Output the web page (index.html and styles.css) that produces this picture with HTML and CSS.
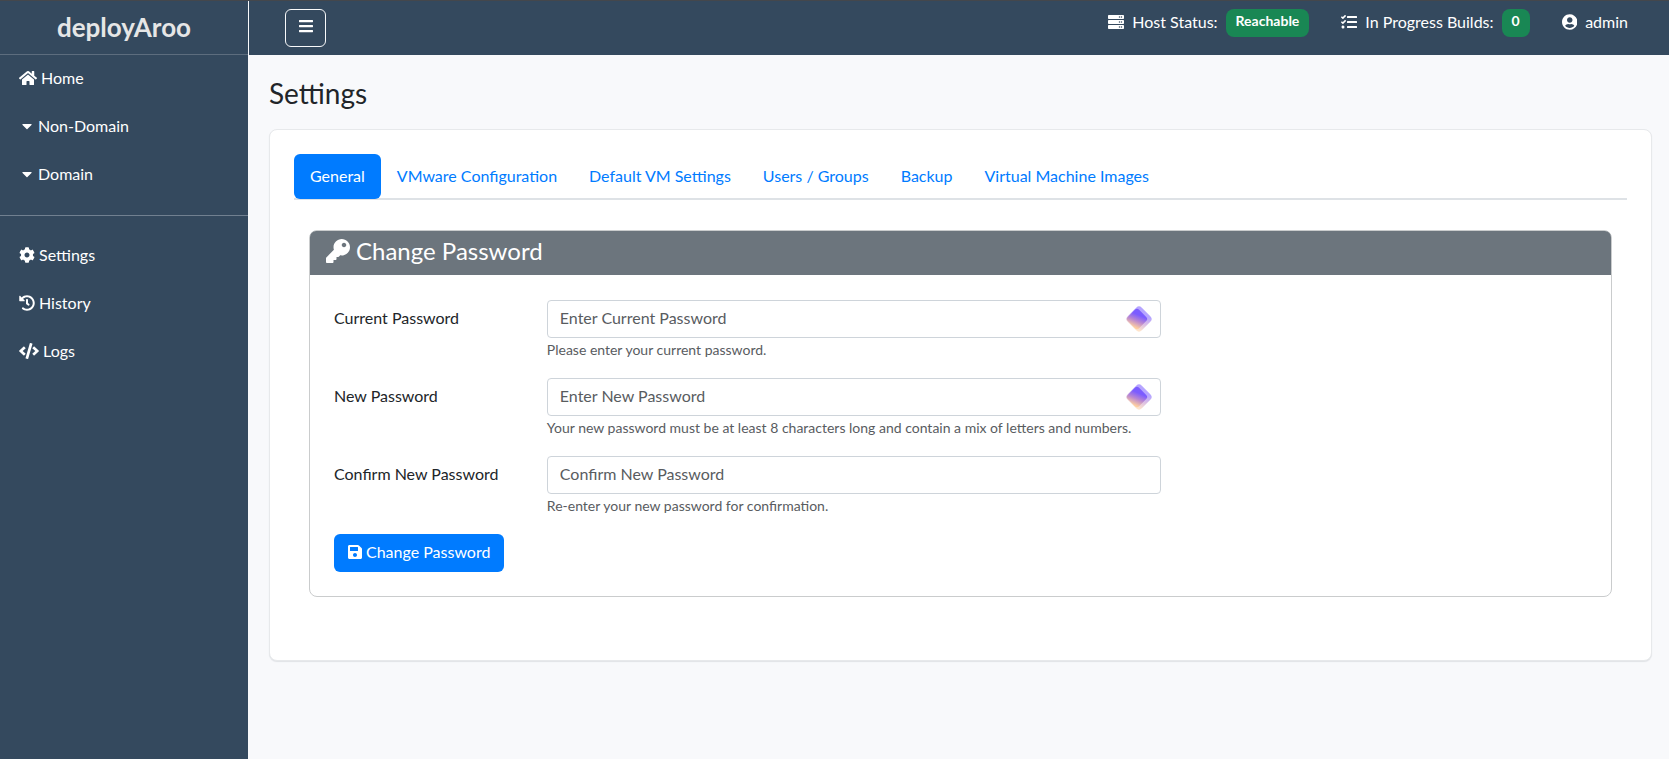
FILE: index.html
```html
<!DOCTYPE html>
<html lang="en">
<head>
<meta charset="utf-8">
<title>deployAroo - Settings</title>
<meta name="viewport" content="width=device-width, initial-scale=1">
<link rel="stylesheet" href="styles.css">
</head>
<body>
<svg class="defs" aria-hidden="true">
  <defs>
    <linearGradient id="gem" x1="0.3" y1="0" x2="0.7" y2="1">
      <stop offset="0.25" stop-color="#7b5cff"/><stop offset="0.6" stop-color="#b987d2"/><stop offset="1" stop-color="#ffcfa0"/>
    </linearGradient>
    <symbol id="diamond" viewBox="0 0 26 26">
      <rect x="3" y="3" width="20" height="20" rx="4" transform="rotate(45 13 13)" fill="url(#gem)" opacity="0.55"/>
      <rect x="3" y="5" width="16" height="16" rx="3" transform="rotate(45 11 13)" fill="url(#gem)"/>
    </symbol>
  </defs>
</svg>
<div class="layout">
  <aside class="sidebar">
    <a class="brand" href="#">deployAroo</a>
    <nav class="side-nav">
      <a class="side-link" href="#"><svg class="icon" viewBox="0 0 576 512"><path d="M280.37 148.26L96 300.11V464a16 16 0 0 0 16 16l112.06-.29a16 16 0 0 0 15.92-16V368a16 16 0 0 1 16-16h64a16 16 0 0 1 16 16v95.64a16 16 0 0 0 16 16.05L464 480a16 16 0 0 0 16-16V300L295.67 148.26a12.19 12.19 0 0 0-15.3 0zM571.6 251.47L488 182.56V44.05a12 12 0 0 0-12-12h-56a12 12 0 0 0-12 12v72.61L318.47 43a48 48 0 0 0-61 0L4.34 251.47a12 12 0 0 0-1.6 16.9l25.5 31A12 12 0 0 0 45.15 301l235.22-193.74a12.19 12.19 0 0 1 15.3 0L530.9 301a12 12 0 0 0 16.9-1.6l25.5-31a12 12 0 0 0-1.7-16.93z"/></svg>Home</a>
      <a class="side-link side-group" href="#"><svg class="icon" viewBox="0 0 320 512"><path d="M31.3 192h257.300c17.800 0 26.700 21.500 14.100 34.100L174.100 354.800c-7.800 7.800-20.500 7.800-28.300 0L17.200 226.100C4.600 213.500 13.500 192 31.300 192z"/></svg>Non-Domain</a>
      <a class="side-link side-group" href="#"><svg class="icon" viewBox="0 0 320 512"><path d="M31.3 192h257.300c17.800 0 26.700 21.500 14.100 34.100L174.100 354.800c-7.800 7.800-20.500 7.800-28.300 0L17.200 226.100C4.600 213.500 13.500 192 31.300 192z"/></svg>Domain</a>
      <hr class="side-rule">
      <a class="side-link" href="#"><svg class="icon" viewBox="0 0 512 512"><path d="M487.4 315.7l-42.6-24.6c4.3-23.2 4.3-47 0-70.2l42.6-24.6c4.9-2.8 7.1-8.6 5.5-14-11.1-35.6-30-67.8-54.7-94.6-3.8-4.1-10-5.1-14.8-2.3L380.8 110c-17.9-15.4-38.5-27.3-60.8-35.1V25.8c0-5.6-3.9-10.5-9.4-11.7-36.7-8.2-74.3-7.8-109.2 0-5.5 1.2-9.4 6.1-9.4 11.7V75c-22.2 7.9-42.8 19.800-60.8 35.1L88.700 85.500c-4.900-2.800-11-1.900-14.800 2.300-24.700 26.700-43.600 58.900-54.700 94.600-1.700 5.400.6 11.200 5.500 14L67.300 221c-4.300 23.200-4.300 47 0 70.200l-42.600 24.600c-4.900 2.800-7.100 8.600-5.500 14 11.100 35.600 30 67.800 54.700 94.600 3.800 4.100 10 5.100 14.800 2.300l42.600-24.600c17.900 15.400 38.500 27.300 60.800 35.100v49.200c0 5.600 3.900 10.500 9.400 11.700 36.700 8.200 74.300 7.800 109.200 0 5.500-1.200 9.400-6.100 9.400-11.700v-49.200c22.200-7.900 42.800-19.800 60.800-35.100l42.600 24.600c4.900 2.800 11 1.900 14.800-2.300 24.700-26.700 43.600-58.900 54.700-94.600 1.500-5.500-.7-11.300-5.600-14.100zM256 336c-44.100 0-80-35.900-80-80s35.900-80 80-80 80 35.900 80 80-35.900 80-80 80z"/></svg>Settings</a>
      <a class="side-link" href="#"><svg class="icon" viewBox="0 0 512 512"><path d="M504 255.531c.253 136.640-111.180 248.372-247.820 248.468-59.015.042-113.223-20.530-155.822-54.911-11.077-8.940-11.905-25.541-1.839-35.607l11.267-11.267c8.609-8.609 22.353-9.551 31.891-1.984C173.062 425.135 212.781 440 256 440c101.705 0 184-82.311 184-184 0-101.705-82.311-184-184-184-48.814 0-93.149 18.969-126.068 49.932l50.754 50.754c10.080 10.080 2.941 27.314-11.313 27.314H24c-8.837 0-16-7.163-16-16V38.627c0-14.254 17.234-21.393 27.314-11.314l49.372 49.372C129.209 34.136 189.552 8 256 8c136.810 0 247.747 110.780 248 247.531zm-180.912 78.784l9.823-12.630c8.138-10.463 6.253-25.542-4.210-33.679L288 256.349V152c0-13.255-10.745-24-24-24h-16c-13.255 0-24 10.745-24 24v135.651l65.409 50.874c10.463 8.137 25.541 6.253 33.679-4.210z"/></svg>History</a>
      <a class="side-link" href="#"><svg class="icon" viewBox="0 0 640 512"><path d="M278.9 511.5l-61-17.7c-6.4-1.8-10-8.5-8.2-14.9L346.2 8.7c1.8-6.4 8.5-10 14.9-8.2l61 17.7c6.4 1.8 10 8.5 8.2 14.9L293.8 503.3c-1.9 6.4-8.5 10.1-14.9 8.2zm-114-112.2l43.5-46.4c4.6-4.9 4.3-12.7-.8-17.2L117 256l90.6-79.7c5.1-4.5 5.5-12.3.8-17.2l-43.5-46.4c-4.5-4.8-12.1-5.1-17-.5L3.8 247.2c-5.1 4.7-5.1 12.8 0 17.5l144.1 135.1c4.9 4.6 12.5 4.4 17-.5zm327.2.6l144.1-135.1c5.1-4.7 5.1-12.8 0-17.5L492.1 112.1c-4.8-4.5-12.4-4.3-17 .5L431.6 159c-4.6 4.9-4.3 12.7.8 17.2L523 256l-90.6 79.7c-5.1 4.5-5.5 12.3-.8 17.2l43.5 46.4c4.5 4.9 12.1 5.1 17 .6z"/></svg>Logs</a>
    </nav>
  </aside>
  <div class="page">
    <header class="topbar">
      <button class="menu-button" type="button" aria-label="Toggle menu"><svg class="icon" viewBox="0 0 448 512"><path d="M16 132h416c8.800 0 16-7.200 16-16V76c0-8.800-7.200-16-16-16H16C7.200 60 0 67.200 0 76v40c0 8.800 7.200 16 16 16zm0 160h416c8.800 0 16-7.200 16-16v-40c0-8.800-7.200-16-16-16H16c-8.800 0-16 7.200-16 16v40c0 8.800 7.200 16 16 16zm0 160h416c8.800 0 16-7.200 16-16v-40c0-8.800-7.200-16-16-16H16c-8.800 0-16 7.200-16 16v40c0 8.800 7.200 16 16 16z"/></svg></button>
      <div class="status-list">
        <a class="status" href="#"><svg class="icon" viewBox="0 0 512 512"><path id="srv" d="M480 160H32c-17.673 0-32-14.327-32-32V64c0-17.673 14.327-32 32-32h448c17.673 0 32 14.327 32 32v64c0 17.673-14.327 32-32 32zm-48-88c-13.255 0-24 10.745-24 24s10.745 24 24 24 24-10.745 24-24-10.745-24-24-24zm-64 0c-13.255 0-24 10.745-24 24s10.745 24 24 24 24-10.745 24-24-10.745-24-24-24z"/><use href="#srv" y="160"/><use href="#srv" y="320"/></svg>Host Status:<span class="badge">Reachable</span></a>
        <a class="status" href="#"><svg class="icon" viewBox="0 0 512 512"><path d="M139.610 35.500a12 12 0 0 0-17 0L58.930 98.810l-22.700-22.120a12 12 0 0 0-17 0L3.530 92.410a12 12 0 0 0 0 17l47.590 47.400a12.780 12.780 0 0 0 17.610 0l15.590-15.620L156.520 69a12.090 12.090 0 0 0 .09-17zm0 159.190a12 12 0 0 0-17 0l-63.680 63.720-22.700-22.100a12 12 0 0 0-17 0L3.530 252a12 12 0 0 0 0 17L51 316.500a12.770 12.770 0 0 0 17.600 0l15.700-15.690 72.200-72.220a12 12 0 0 0 .09-16.900zM64 368c-26.490 0-48.590 21.500-48.590 48S37.530 464 64 464a48 48 0 0 0 0-96zm432 16H208a16 16 0 0 0-16 16v32a16 16 0 0 0 16 16h288a16 16 0 0 0 16-16v-32a16 16 0 0 0-16-16zm0-320H208a16 16 0 0 0-16 16v32a16 16 0 0 0 16 16h288a16 16 0 0 0 16-16V80a16 16 0 0 0-16-16zm0 160H208a16 16 0 0 0-16 16v32a16 16 0 0 0 16 16h288a16 16 0 0 0 16-16v-32a16 16 0 0 0-16-16z"/></svg>In Progress Builds:<span class="badge">0</span></a>
        <a class="status" href="#"><svg class="icon" viewBox="0 0 496 512"><path d="M248 8C111 8 0 119 0 256s111 248 248 248 248-111 248-248S385 8 248 8zm0 96c48.600 0 88 39.400 88 88s-39.400 88-88 88-88-39.400-88-88 39.400-88 88-88zm0 344c-58.700 0-111.300-26.600-146.500-68.200 18.800-35.400 55.600-59.800 98.500-59.800 2.400 0 4.800.4 7.100 1.100 13 4.200 26.600 6.900 40.900 6.900 14.300 0 28-2.700 40.900-6.900 2.300-.7 4.700-1.100 7.100-1.100 42.900 0 79.700 24.400 98.500 59.800C359.300 421.400 306.700 448 248 448z"/></svg>admin</a>
      </div>
    </header>
    <main class="content">
      <h1 class="title">Settings</h1>
      <section class="card">
        <nav class="tabs">
          <a class="tab tab-active" href="#">General</a>
          <a class="tab" href="#">VMware Configuration</a>
          <a class="tab" href="#">Default VM Settings</a>
          <a class="tab" href="#">Users / Groups</a>
          <a class="tab" href="#">Backup</a>
          <a class="tab" href="#">Virtual Machine Images</a>
        </nav>
        <div class="tab-body">
          <section class="panel">
            <h2 class="panel-title"><svg class="icon icon-large" viewBox="0 0 512 512"><path d="M512 176.001C512 273.203 433.202 352 336 352c-11.220 0-22.190-1.062-32.827-3.069l-24.012 27.014A23.999 23.999 0 0 1 261.223 384H224v40c0 13.255-10.745 24-24 24h-40v40c0 13.255-10.745 24-24 24H24c-13.255 0-24-10.745-24-24v-78.059c0-6.365 2.529-12.470 7.029-16.971l161.802-161.802C163.108 213.814 160 195.271 160 176 160 78.798 238.797.001 335.999 0 433.488-.001 512 78.511 512 176.001zM336 128c0 26.510 21.490 48 48 48s48-21.490 48-48-21.490-48-48-48-48 21.490-48 48z"/></svg>Change Password</h2>
            <form class="form">
              <div class="row">
                <label class="label" for="current">Current Password</label>
                <div class="field">
                  <input class="input" id="current" type="password" placeholder="Enter Current Password">
                  <svg class="gem"><use href="#diamond"/></svg>
                  <div class="help">Please enter your current password.</div>
                </div>
              </div>
              <div class="row">
                <label class="label" for="new">New Password</label>
                <div class="field">
                  <input class="input" id="new" type="password" placeholder="Enter New Password">
                  <svg class="gem"><use href="#diamond"/></svg>
                  <div class="help">Your new password must be at least 8 characters long and contain a mix of letters and numbers.</div>
                </div>
              </div>
              <div class="row">
                <label class="label" for="confirm">Confirm New Password</label>
                <div class="field">
                  <input class="input" id="confirm" type="password" placeholder="Confirm New Password">
                  <div class="help">Re-enter your new password for confirmation.</div>
                </div>
              </div>
              <button class="submit" type="button"><svg class="icon" viewBox="0 0 448 512"><path d="M433.941 129.941l-83.882-83.882A48 48 0 0 0 316.118 32H48C21.490 32 0 53.490 0 80v352c0 26.510 21.490 48 48 48h352c26.510 0 48-21.490 48-48V163.882a48 48 0 0 0-14.059-33.941zM224 416c-35.346 0-64-28.654-64-64 0-35.346 28.654-64 64-64s64 28.654 64 64c0 35.346-28.654 64-64 64zm96-304.520V212c0 6.627-5.373 12-12 12H76c-6.627 0-12-5.373-12-12V108c0-6.627 5.373-12 12-12h228.520c3.183 0 6.235 1.264 8.485 3.515l3.480 3.480A11.996 11.996 0 0 1 320 111.480z"/></svg>Change Password</button>
            </form>
          </section>
        </div>
      </section>
    </main>
  </div>
</div>
</body>
</html>
```
FILE: styles.css
```css
* {
  box-sizing: border-box;
}

body {
  margin: 0;
  background: #f8f9fb;
  color: #212529;
  font: 16px/24px Lato, sans-serif;
}

a {
  color: inherit;
  text-decoration: none;
}

button,
input {
  font: inherit;
}

.defs {
  position: absolute;
  width: 0;
  height: 0;
}

.icon {
  height: 16px;
  flex: none;
  fill: currentColor;
}

.icon-large {
  height: 24px;
}

.layout {
  display: flex;
  min-height: 100vh;
  border-top: 1px solid #44474c;
}

.sidebar {
  flex: none;
  width: 249px;
  background: #34495e;
  border-right: 1px solid #f8f9fb;
  color: #fff;
}

.brand {
  display: flex;
  align-items: center;
  justify-content: center;
  height: 54px;
  padding-bottom: 2px;
  border-bottom: 1px solid #5d6d7e;
  color: #e6e6e6;
  font-size: 26px;
  font-weight: 700;
}

.side-link {
  display: flex;
  align-items: center;
  gap: 4px;
  height: 48px;
  padding: 0 19px 2px;
}

.side-group {
  gap: 6px;
  padding: 0 22px 2px;
}

.side-rule {
  height: 1px;
  margin: 16px 0;
  border: 0;
  background: #718090;
}

.page {
  flex: 1;
  min-width: 0;
}

.topbar {
  display: flex;
  align-items: flex-start;
  justify-content: space-between;
  height: 54px;
  padding: 8px 41px 0 36px;
  background: #34495e;
  color: #fff;
}

.menu-button {
  display: flex;
  justify-content: center;
  align-items: flex-start;
  width: 41px;
  height: 38px;
  padding: 8px 0;
  background: none;
  border: 1px solid #f8f9fa;
  border-radius: 6px;
  color: #fff;
}

.status-list {
  display: flex;
  gap: 32px;
}

.status {
  display: flex;
  align-items: center;
  gap: 8px;
  height: 26px;
}

.badge {
  align-self: flex-start;
  flex: none;
  height: 28px;
  padding: 0 10px;
  background: #198754;
  border-radius: 8px;
  font-size: 14px;
  font-weight: 700;
}

.content {
  padding: 21px 17px 22px 20px;
}

.title {
  margin: 0 0 19px;
  font-size: 28px;
  font-weight: 400;
  line-height: 34px;
}

.card {
  padding: 24px;
  background: #fff;
  border: 1px solid #e7e9eb;
  border-radius: 8px;
  box-shadow: 0 1px 1px #e0e3e6;
}

.tabs {
  display: flex;
  border-bottom: 2px solid #dee2e6;
}

.tab {
  height: 45px;
  margin-bottom: -1px;
  padding: 10px 16px;
  border-radius: 6px;
  color: #007bff;
}

.tab-active {
  background: #007bff;
  color: #fff;
}

.tab-body {
  padding: 30px 15px 39px;
}

.panel {
  border: 1px solid #cacccd;
  border-radius: 8px;
}

.panel-title {
  display: flex;
  align-items: center;
  gap: 6px;
  height: 44px;
  margin: 0;
  padding: 0 16px 4px;
  background: #6c757d;
  border-radius: 6px 6px 0 0;
  color: #fff;
  font-size: 24px;
  font-weight: 400;
}

.form {
  padding: 25px 24px 24px;
}

.row {
  display: grid;
  grid-template-columns: repeat(12, minmax(0, 1fr));
  column-gap: 24px;
  margin-bottom: 16px;
}

.label {
  grid-column: span 2;
  padding: 6px 0;
}

.field {
  grid-column: span 6;
  position: relative;
}

.input {
  display: block;
  width: 100%;
  height: 38px;
  padding: 4px 12px 8px;
  background: #fff;
  border: 1px solid #ced4da;
  border-radius: 4px;
}

.input::placeholder {
  color: #595c5f;
  opacity: 1;
}

.gem {
  position: absolute;
  top: 6px;
  right: 9px;
  width: 26px;
  height: 26px;
}

.help {
  margin-top: 2px;
  color: #595c5f;
  font-size: 14px;
  line-height: 20px;
  padding-bottom: 2px;
}

.submit {
  display: flex;
  align-items: center;
  gap: 4px;
  height: 38px;
  padding: 0 14px 2px;
  background: #007bff;
  border: 0;
  border-radius: 6px;
  color: #fff;
}
```
